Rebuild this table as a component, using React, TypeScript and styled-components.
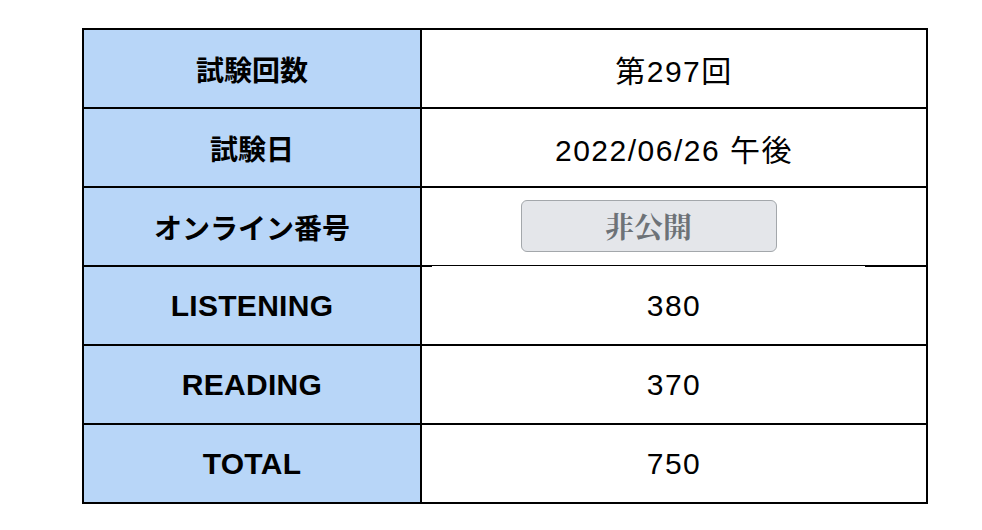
import React from "react";
import styled, { createGlobalStyle } from "styled-components";

const GlobalStyle = createGlobalStyle`
  html, body {
    margin: 0;
    padding: 0;
    background: #ffffff;
  }
  body {
    font-family: "Liberation Sans", "Noto Sans CJK JP", sans-serif;
    color: #000;
  }
`;

const Page = styled.div`
  padding: 28px 0 0 82px;
`;

const Table = styled.div`
  width: 842px;
  border: 2px solid #000;
  display: flex;
  flex-direction: column;
`;

const Row = styled.div`
  display: flex;
  height: 77px;
  & + & {
    border-top: 2px solid #000;
  }
`;

const Label = styled.div<{ $latin?: boolean }>`
  width: 336px;
  flex: none;
  background: #b8d6f8;
  border-right: 2px solid #000;
  display: flex;
  align-items: center;
  justify-content: center;
  font-weight: 700;
  font-size: ${(p) => (p.$latin ? "30px" : "28px")};
  letter-spacing: ${(p) => (p.$latin ? "0.3px" : "0")};
`;

const Value = styled.div<{ $start?: boolean }>`
  flex: 1;
  display: flex;
  align-items: center;
  justify-content: ${(p) => (p.$start ? "flex-start" : "center")};
  padding-left: ${(p) => (p.$start ? "10px" : "0")};
  font-size: 30px;
  letter-spacing: ${(p) => (p.$start ? "0" : "1.5px")};
  background: #fff;
`;

const ButtonWrap = styled.div`
  position: relative;
  width: 433px;
  height: 100%;
  display: flex;
  align-items: center;
  justify-content: center;
  background: #fff;
  &::after {
    content: "";
    position: absolute;
    left: 0;
    right: 0;
    bottom: -2px;
    height: 1px;
    background: #fff;
  }
`;

const PrivateButton = styled.button`
  width: 256px;
  height: 52px;
  margin-top: -2px;
  border: 1.5px solid #a3a7ab;
  border-radius: 6px;
  background: #e4e6ea;
  color: #6d7277;
  font-family: "Noto Serif CJK JP", "Noto Serif JP", "Liberation Serif", serif;
  font-weight: 700;
  font-size: 29px;
  padding: 0;
  display: flex;
  align-items: center;
  justify-content: center;
`;

const rows: { label: string; value: string }[] = [
  { label: "試験回数", value: "第297回" },
  { label: "試験日", value: "2022/06/26 午後" },
];

const scores: { label: string; value: string }[] = [
  { label: "LISTENING", value: "380" },
  { label: "READING", value: "370" },
  { label: "TOTAL", value: "750" },
];

export default function App() {
  return (
    <>
      <GlobalStyle />
      <Page>
        <Table>
          {rows.map((r) => (
            <Row key={r.label}>
              <Label>{r.label}</Label>
              <Value>{r.value}</Value>
            </Row>
          ))}
          <Row>
            <Label>オンライン番号</Label>
            <Value $start>
              <ButtonWrap>
                <PrivateButton type="button">非公開</PrivateButton>
              </ButtonWrap>
            </Value>
          </Row>
          {scores.map((r) => (
            <Row key={r.label}>
              <Label $latin>{r.label}</Label>
              <Value>{r.value}</Value>
            </Row>
          ))}
        </Table>
      </Page>
    </>
  );
}
